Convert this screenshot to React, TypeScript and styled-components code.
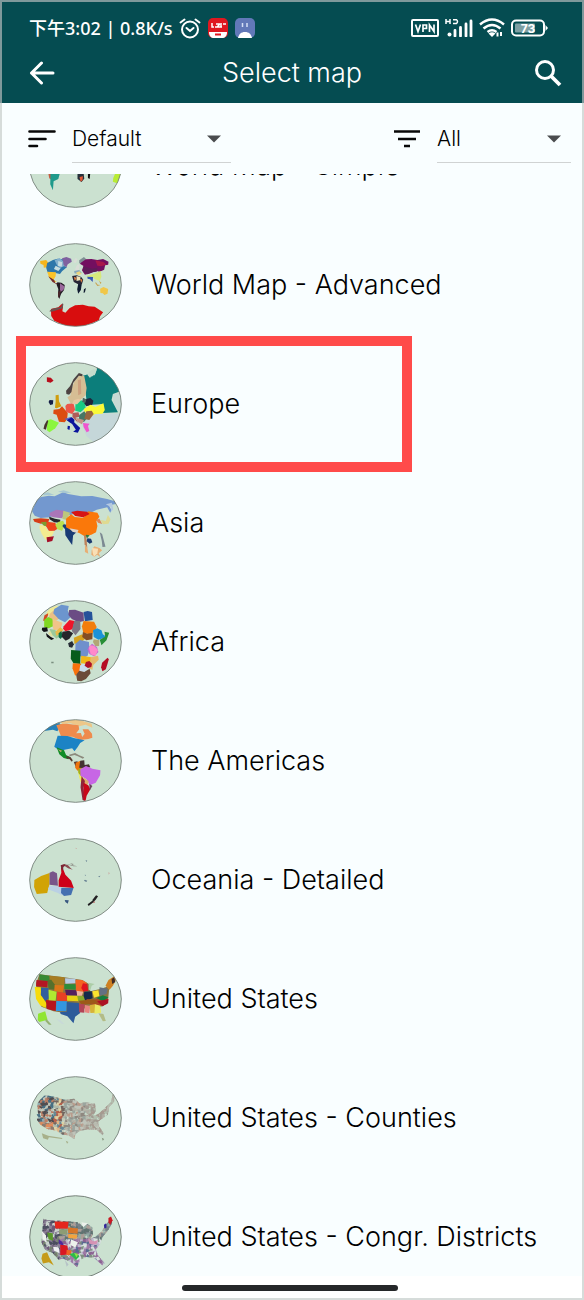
import React, { useId, useLayoutEffect, useRef } from 'react';
import styled, { createGlobalStyle } from 'styled-components';

const GlobalStyle = createGlobalStyle`
  *, *::before, *::after { box-sizing: border-box; }
  body {
    margin: 0;
    background: #fff;
    color: #000;
    font-family: Inter, "Noto Sans CJK SC", sans-serif;
  }
`;

const Screen = styled.div`
  display: flex;
  flex-direction: column;
  height: 100vh;
  background: #fff;
  box-shadow: inset 0 0 0 2px #d6dcda;
`;

const Header = styled.header`
  flex: none;
  background: #054c51;
  border: 2px solid #7f999b;
  border-bottom: 0;
  color: #fff;
`;

const StatusBar = styled.div`
  display: flex;
  align-items: center;
  justify-content: space-between;
  height: 42px;
  padding: 10px 34px 0 27px;
`;

const StatusGroup = styled.div<{ $gap: number }>`
  display: flex;
  align-items: center;
  gap: ${(p) => p.$gap}px;
`;

const Clock = styled.span`
  font: 500 18px/24px "Noto Sans", "Noto Sans CJK SC", sans-serif;
  white-space: pre;
`;

const TitleBar = styled.div`
  display: grid;
  grid-template-columns: 32px 1fr 32px;
  align-items: center;
  height: 59px;
  padding: 0 18px 2px 24px;
`;

const Title = styled.h1`
  margin: 0;
  padding-right: 6px;
  font-size: 27px;
  font-weight: 350;
  line-height: 32px;
  text-align: center;
`;

const IconButton = styled.button`
  display: flex;
  align-items: center;
  justify-content: center;
  width: 32px;
  height: 32px;
  padding: 0;
  border: 0;
  background: none;
  color: inherit;
`;

const Body = styled.main`
  display: flex;
  flex: 1;
  flex-direction: column;
  min-height: 0;
  margin: 0 2px;
  background: #f9feff;
`;

const FilterBar = styled.div`
  display: flex;
  flex: none;
  justify-content: space-between;
  height: 71px;
  padding: 12px 11px 11px 26px;
`;

const Filter = styled.label<{ $gap: number }>`
  display: flex;
  align-items: center;
  gap: ${(p) => p.$gap}px;
`;

const SelectWrap = styled.span<{ $width: number }>`
  display: grid;
  align-items: center;
  width: ${(p) => p.$width}px;
  height: 48px;
  border-bottom: 1px solid #d0d3d3;

  > * { grid-area: 1 / 1; }
  > svg { justify-self: end; margin-right: 10px; pointer-events: none; }
`;

const Select = styled.select`
  width: 100%;
  height: 47px;
  padding: 1px 0 0;
  border: 0;
  background: none;
  appearance: none;
  color: #000;
  font: 350 21px/28px Inter, sans-serif;
`;

const List = styled.ul`
  flex: 1;
  min-height: 0;
  margin: 0;
  padding: 0;
  list-style: none;
  overflow-y: auto;
  scrollbar-width: none;
`;

const Row = styled.li`
  position: relative;
  height: 119px;
`;

const RowLink = styled.a`
  display: flex;
  align-items: center;
  gap: 29px;
  height: 100%;
  padding: 0 12px 0 27px;
  color: #000;
  font-size: 27px;
  font-weight: 350;
  line-height: 32px;
  text-decoration: none;
  white-space: nowrap;
`;

const Highlight = styled.span`
  position: absolute;
  inset: -8px auto -9px 14px;
  width: 396px;
  border: 10px solid #ff4b4a;
  pointer-events: none;
`;

const Thumb = styled.svg`
  flex: none;
  width: 93px;
  height: 84px;
`;

const HomeArea = styled.footer`
  display: flex;
  flex: none;
  align-items: center;
  justify-content: center;
  height: 24px;
  margin: 0 2px;
  padding: 2px 4px 0 0;
  border-bottom: 2px solid #d6dcda;
  background: #fff;
`;

const HomeBar = styled.span`
  width: 216px;
  height: 6px;
  border-radius: 3px;
  background: #252729;
`;

/* ---------- icons ---------- */

const AlarmIcon = () => (
  <svg width="22" height="21" viewBox="0 0 22 21" fill="none" stroke="#fff" strokeWidth="2" strokeLinecap="round">
    <circle cx="11" cy="11.5" r="8" />
    <path d="M7.5 10l3.5 3 3.5-3M1.5 4.5l4-3M20.500 4.500l-4-3" />
  </svg>
);

const RedAppIcon = () => (
  <svg width="20" height="20" viewBox="0 0 20 20">
    <rect width="20" height="20" rx="5" fill="#df1820" />
    <path d="M1 14h18c0 4-2 6-5 6H6c-3 0-5-2-5-6z" fill="#fff" />
    <path d="M4 5v4h2M8 6h4M9 9l3-3M13 5v4M15 6h3M7 9h7" stroke="#fff" strokeWidth="1.500" fill="none" />
    <path d="M7 16.500h6" stroke="#df1820" strokeWidth="2" />
  </svg>
);

const BlueAppIcon = () => (
  <svg width="20" height="20" viewBox="0 0 20 20">
    <rect width="20" height="20" rx="5" fill="#6278b8" />
    <path d="M3 20c1-4 3-6 7-6s6 2 7 6z" fill="#fff" />
    <path d="M7.500 5v4M12 5v4" stroke="#d5def5" strokeWidth="1.500" />
  </svg>
);

const VpnIcon = () => (
  <svg width="28" height="18" viewBox="0 0 28 18" fill="none" stroke="#fff">
    <rect x="1" y="1" width="26" height="16" rx="1" strokeWidth="2" />
    <path d="M4.500 5.500l2.500 7 2.500-7M12 13V6h3.500v3.500H12M18.500 13V6l4.500 6.500V5.500" strokeWidth="1.700" />
  </svg>
);

const SignalIcon = () => (
  <svg width="28" height="18" viewBox="0 0 28 18" fill="none" stroke="#fff">
    <path d="M1 0v5M1 2.500h4M5 0v5M8 .8h3.500q2 1.700 0 3.700H8" strokeWidth="1.500" />
    <circle cx="4.500" cy="15.500" r="2" fill="#fff" stroke="none" />
    <path d="M10 17v-5.500M15.500 17V8.500M21 17V5M26 17V2" strokeWidth="2.800" strokeLinecap="round" />
  </svg>
);

const WifiIcon = () => (
  <svg width="26" height="20" viewBox="0 0 26 20" fill="none" stroke="#fff" strokeWidth="2.500">
    <path d="M1 6.500q12-10 24 0M4.500 10.500q8.500-7 17 0M8.500 14q4.500-3.500 9 0" />
    <path d="M9.500 15.500q3.500-2.500 7 0L13 19z" fill="#fff" stroke="none" />
    <path d="M18.500 14.500v4M22 14v4" strokeWidth="2" />
  </svg>
);

const BatteryIcon = () => (
  <svg width="37" height="18" viewBox="0 0 37 18">
    <rect x="1" y="1.500" width="32" height="15" rx="4" fill="none" stroke="#fff" strokeWidth="2" />
    <rect x="4" y="4.500" width="20" height="9" rx="1" fill="#7d9fa3" />
    <path d="M34.500 6l2.500 3-2.500 3z" fill="#fff" />
    <text x="17" y="13.500" textAnchor="middle" fontFamily="Inter, sans-serif" fontSize="12" fontWeight="700" fill="#fff">73</text>
  </svg>
);

const BackIcon = () => (
  <svg width="26" height="24" viewBox="0 0 26 24" fill="none" stroke="#fff" strokeWidth="3" strokeLinecap="round" strokeLinejoin="round">
    <path d="M24 12H2.500M12.500 2l-10 10 10 10" />
  </svg>
);

const SearchIcon = () => (
  <svg width="28" height="28" viewBox="0 0 28 28" fill="none" stroke="#fff" strokeWidth="3">
    <circle cx="11" cy="11" r="8.500" />
    <path d="M17 17l9 9" strokeWidth="3.800" />
  </svg>
);

const SortIcon = () => (
  <svg width="28" height="20" viewBox="0 0 28 20" stroke="#080808" strokeWidth="2.600" strokeLinecap="round">
    <path d="M1.500 2.500h25M1.500 10h16M1.500 17h7.500" />
  </svg>
);

const FilterIcon = () => (
  <svg width="28" height="20" viewBox="0 0 28 20" stroke="#080808" strokeWidth="2.600">
    <path d="M1 2.500h26M5 10h18M11 17h6" />
  </svg>
);

const Caret = () => (
  <svg width="14" height="8" viewBox="0 0 14 8">
    <path d="M0 .5h14l-7 7z" fill="#4a4c4e" />
  </svg>
);

/* ---------- map thumbnails ---------- */

type Patch = [fill: string, d: string];

interface MapArt {
  box: [number, number, number, number];
  patches: Patch[];
  mosaic?: { outline: string; area: [number, number, number, number]; size: number; colors: (t: number, u: number) => string[] };
  over?: Patch[];
}

/* Small repeatable number source for the fine county mosaics. */
const noise = (seed: number) => {
  let s = seed;
  return () => {
    s = (s * 16807) % 2147483647;
    return s / 2147483647;
  };
};

const mosaicPatches = ({ area, size, colors }: NonNullable<MapArt['mosaic']>): Patch[] => {
  const rnd = noise(71);
  const [x0, y0, w, h] = area;
  const out: Patch[] = [];
  for (let y = y0; y < y0 + h; y += size) {
    for (let x = x0; x < x0 + w; x += size) {
      const palette = colors((x - x0) / w, (y - y0) / h);
      const j = () => Math.round((rnd() - 0.5) * size * 0.9);
      const e = size + 2;
      out.push([
        palette[Math.floor(rnd() * palette.length)],
        `M${x + j()} ${y + j()}L${x + e + j()} ${y + j()}L${x + e + j()} ${y + e + j()}L${x + j()} ${y + e + j()}Z`,
      ]);
    }
  }
  return out;
};

const simple: MapArt = {
  box: [88, 39, 276, 252],
  patches: [
    ['#c65b40', 'M145 185h14l-3 22-8-5z'],
    ['#1f9a8b', 'M152 185h28l-5 19-14 7-2 27-8-18z'],
    ['#25303a', 'M232 185h18l2 18-8 10-12-9z'],
    ['#e35936', 'M238 198l10-2-1 12-6 4z'],
    ['#111', 'M263 185h7l-2 19-5-3z'],
    ['#b8ec35', 'M345 185h25l-15 34-18-7 1-11z'],
  ],
};

const advanced: MapArt = {
  box: [59, 37, 276, 252],
  patches: [
    ['#f6b51c', 'M92 91l18-3 6 8-3 14-10 1-1-8-9-4z'],
    ['#2d76aa', 'M113 97l17-9 14-4 17 2 2 20 9 3-15 13-6 8-10-2-27-3-4-14z'],
    ['#82afcd', 'M135 89l15-7 10 9 4 15-13 6-9-8z'],
    ['#c6dce0', 'M146 91l12 4-2 13-11-3zM138 105l15 8-7 8-13-6z'],
    ['#80619f', 'M157 83l13-4 14 5 2 9-12 8-4 9-8-6-2-13z'],
    ['#fac329', 'M113 123l26 2-1 12-6 10 9 7-8 1-14-14z'],
    ['#742c2e', 'M116 137l18 11 3 9 9 1-2 4-15-8z'],
    ['#221b24', 'M143 155l12 1 10 7-2 15-9 12-5 15-4-10 1-20-5-13z'],
    ['#9a679c', 'M151 158l13 9-2 10-11 8z'],
    ['#4a282b', 'M145 184l9-5-6 24-3-7z'],
    ['#d9ded7', 'M197 82l6 3-5 12-8-2zM202 102l8-1-3 18-8 5-3-9z'],
    ['#7f8f94', 'M208 89l14-10 7 7-13 13-8-1z'],
    ['#730f60', 'M216 94l12-8 16-1 18 3 17-3 16 8-1 9-9 2-3 13-13 6-12-3-13 7-19 5-9-13 5-13-11-7z'],
    ['#a8174a', 'M256 89l24 5 9 8-16 5-11-2z'],
    ['#5d1d58', 'M220 107l27 7 15-3-2 12-14 2-13 6-12-6z'],
    ['#89a9bb', 'M193 121l15-3 8 9-12 3-10-2z'],
    ['#ecd57b', 'M198 126l11-4 6 8-11 3z'],
    ['#252536', 'M187 136l14-2 13 5 6 8-4 14-6 9-5-9-13-7-3-10z'],
    ['#ece2bb', 'M200 136l12 3-2 10-10 2z'],
    ['#df8145', 'M192 138l9 4-6 8zM210 144l8 3-4 9z'],
    ['#111c31', 'M205 160l10 3-2 15-8 11-3-13zM222 176l6-4-3 13-4 2z'],
    ['#d6e87c', 'M229 136l23-7 20-8 2 17-5 13-14-5-9-8-10 3z'],
    ['#3657b5', 'M232 138l17 1-1 15-8-8-7-2z'],
    ['#f0c749', 'M270 174l10-5 14 6-2 14-9 4-5-5-7-1z'],
    ['#c8a24b', 'M257 154l6 8 9 1-10 3-6-8zM267 150l7 6-3 4z'],
    ['#d80d0e', 'M124 235l22-5 10-10 4 8-2 14 9 4 12-13 17-9 23-2 17 5 18 1 25 17-9 12-4 12-18 7-20 8-31 4-34-4-29-14-9-14z'],
    ['#6d514e', 'M119 242l9-8 26-5 4-11 3 2-2 13-32 10z'],
  ],
};

const europe: MapArt = {
  box: [59, 96, 276, 252],
  patches: [
    ['#c5d7d9', 'M205 258l30 6 23-16 74 3-15 41-28 29-36 17-24-20-9-26z'],
    ['#c7d9d4', 'M308 192l26-4v55l-23-7z'],
    ['#0c7e7b', 'M219 137l18-5 8 8 10-8 7-22 24 9 20 17 13 17 11 31-22 8-4 18 19 37-44 2-1-27-30 2-18-10-4-35-8-35z'],
    ['#c5dccc', 'M237 126l14-10 10 2-7 18-8-1-6 9-8-10z'],
    ['#d6be94', 'M184 181l9-25 17-22 13 4 7 36-3 22-17 15-12-1-3 10-13-1-9-17 9-6z'],
    ['#cda07f', 'M204 151l9-3 1 43-9 5z'],
    ['#4d4342', 'M169 182l12-14 10-20 16-19 11 4-1 6-10-2-17 22-5 27-7 8-8-2z'],
    ['#b80e1b', 'M112 142l12 1 8 9-9 6-11-3z'],
    ['#d09d0d', 'M138 196l9-2 1 20 7 15-14 6-5-2 2-18z'],
    ['#141e46', 'M120 210l11 1-1 12-8 2-5-9z'],
    ['#dc4c10', 'M132 239l17-2 8-8 17 20-2 19-7 9-17-2-7-21-10-3z'],
    ['#ec564a', 'M172 222l19-2 5 19-9 13-18-6-2-18z'],
    ['#19ca83', 'M197 220l15-10 14 6 1 17-15 14-16-5z'],
    ['#21243a', 'M229 207l12-3 9 8-3 12-18 5-6-9z'],
    ['#4c655e', 'M219 203l10 5-3 11-9-3z'],
    ['#fafa36', 'M222 237l20-13 14 7 24-11 4 20-7 11-22 1-9 6-6-13-16 2z'],
    ['#8bf63e', 'M113 271l11-3 24 10-11 17-17 12-8-6z'],
    ['#46352e', 'M105 284l8-14 3 4-7 25-7-3z'],
    ['#5967c9', 'M163 267l20-6 9 7-14 4z'],
    ['#0b159c', 'M171 271l15-9 8 7-1 8 18 17-7 14-14-3 8-6-11-17-8-5zM174 287l7 2-2 11-6-3z'],
    ['#af5b59', 'M188 249l18-2 3 13-12 3 8 16-17-18z'],
    ['#477765', 'M208 255l15-11 12 16-13 16-15-8z'],
    ['#98663f', 'M229 244l16-2 6 10-13 18-15-3z'],
    ['#c59485', 'M198 263l24 7-6 13-12-7z'],
    ['#ef55ce', 'M219 279l20 2-5 7 4 15-8 4-9-16z'],
    ['#e7c6a1', 'M192 211l13-5 9 4-12 13-15-1z'],
  ],
};

const asia: MapArt = {
  box: [59, 33, 276, 252],
  patches: [
    ['#7398cf', 'M81 91l14-10 23-4 17 2 25-12 15 5 39 7 33-1 44 9 23 7 3 8-21 4 8 15-4 7-9-16-31 7-18 9-34-3-25 10-35-7-27 14-27 2-18-7-8-13z'],
    ['#a8c8d2', 'M99 72l16-5 19 8-31 1zM145 65l17-4 23 7-20 1z'],
    ['#aa76b8', 'M121 128l19-9 24 3 7 10-15 13-26-3-11-6z'],
    ['#bdc77d', 'M161 122l20 6-10 22-13-3z'],
    ['#25262b', 'M119 140l17 6 16 3-1 9-17-1-14-9z'],
    ['#d63e18', 'M71 147l23-2 25 2-3 11-22 3-19-6z'],
    ['#7e9a30', 'M94 157l15-2 13 12-18 2z'],
    ['#ee451b', 'M112 155l24 3 12 15-13 9-17 1-8-14z'],
    ['#f4eb90', 'M91 165l16 3 8 14 19 2-8 16-18 10-11-18-7-17z'],
    ['#a70e27', 'M111 202l22-3-5 14-15 4z'],
    ['#b9e051', 'M147 155l13-3 6 12-9 18-14-4-6-14z'],
    ['#193b75', 'M162 163l13 2 16 15 17-1-18 17-3 29-10-14-10-15-1-18-8-10z'],
    ['#fa780a', 'M169 146l15-13 11 8 24 2 15-12-1-7 29 4 6 12-9 14 3 14-4 19-14 7-20 5-16-10-25-9-14-8z'],
    ['#d61414', 'M184 126l18-4 29 3 8 7-19 10-24-4-6-6z'],
    ['#ddd3ca', 'M179 175l27 5-4 9-14-4z'],
    ['#2e7a41', 'M228 194l11 2-7 8-6-4z'],
    ['#bd8159', 'M222 194l7 4 3 36-8-11z'],
    ['#1e3c6f', 'M232 205l11 1 4 11-8 4-9-7z'],
    ['#e8ae73', 'M225 224l7 9 3 18-10-5zM245 240l8-11 15 5 8 7-10 9 5 11-10-7-8 6-9-6z'],
    ['#f9dfb5', 'M246 234l18 2-2 14-10 10-4-11z'],
    ['#7c8992', 'M269 187l7 5 10 38-9 1-2-18z'],
    ['#dfda91', 'M272 150l15 3 6-18 8 13-6 13-17 2z'],
    ['#df8554', 'M258 149l10-3 8 16-12-4z'],
    ['#b5c9e2', 'M287 103l18-5 4 20-7 8 1-14z'],
  ],
};

const africa: MapArt = {
  box: [59, 391, 276, 252],
  patches: [
    ['#f0e995', 'M110 430l12-14 20-8 5 6-10 7-10 11-10 7z'],
    ['#d44c22', 'M101 453l4-16 11-6-1 7-8 16z'],
    ['#eabf85', 'M121 432l13-12 10-1 4 28-9 6-22-7z'],
    ['#6c95ce', 'M134 418l21-13 22 4-3 14 9 19-17 16-19-10-16-17z'],
    ['#80d721', 'M104 450l12-8 13 6 5 20-17 8-13-3z'],
    ['#f1c489', 'M129 448l7 3 22 8-5 20-21 3-3-15z'],
    ['#131317', 'M98 474l15-1 2 12-12 2-6-6zM109 490l15 12 10 5-9 4-13-10z'],
    ['#dfe0a0', 'M115 491l12-11 9 14-10 8z'],
    ['#9bc99b', 'M119 477l18 4 12 19-8 7-12-10z'],
    ['#6b4c84', 'M178 421l18-1 25 9 1 25-16 4-20-10-10-12z'],
    ['#26529a', 'M221 427l12-3 13 3 2 24-23 4z'],
    ['#ef1529', 'M162 470l17-19 16 3-7 25-21 6-7-8z'],
    ['#e9bb4a', 'M137 486l15-13 9 7-11 14-10 4z'],
    ['#0b6d45', 'M147 491l8-7 4 16-6 8-6-5z'],
    ['#26272c', 'M158 486l20-3 12 8-11 16-11 6-12-12z'],
    ['#7b7783', 'M193 454l18-1 1 25-15 19-11-13z'],
    ['#f27d0c', 'M221 454l31 2 8 16-7 15-15 7-18-5-4-19z'],
    ['#d5a31f', 'M192 504l25-10 8 14-10 9-21 6z'],
    ['#824e24', 'M219 487l13 5 16-3-1 20-18 3-12-10z'],
    ['#1a92d8', 'M249 482l12-6 13 6 4 12 12 8-25 8-14-8z'],
    ['#288e37', 'M283 486l14 3-8 23-15 15-5-17 16-9z'],
    ['#b1a675', 'M251 509l17 3-1 17-11 1-7-13z'],
    ['#6f90cc', 'M197 522l13-11 27 6 1 24-5 17-13 7-15-9-9-4z'],
    ['#262c35', 'M175 521l12-7 5 10-5 10-9-2z'],
    ['#c06ad0', 'M236 532l10-10 15 11 4 14-12 13-15-7-5-14z'],
    ['#ff89cb', 'M240 527l12 1 12 13-8 18-14-5-5-19z'],
    ['#075c1c', 'M184 541l28 2-1 40-20-2-8-14z'],
    ['#f1b718', 'M214 558l30 5 10 14-12 7-29-3z'],
    ['#e7ba6c', 'M242 563l22-5 2 12-16 16-3 14-9-3z'],
    ['#f8710b', 'M189 581l25 1-3 24-15 12-8-22z'],
    ['#cadcec', 'M211 587l11-5 12 15-11 10-15-2z'],
    ['#ae1028', 'M228 577l10-3 8 8-2 10-10 3-10-7z'],
    ['#6b4b3a', 'M208 603l15 4 16-10 3 14-14 17-14 7-12-2-3-18z'],
    ['#b50b22', 'M276 579l16-15 4 5-9 30-10 6-4-12z'],
    ['#7a8e7f', 'M125 576h7v5h-7z'],
  ],
};

const americas: MapArt = {
  box: [59, 28, 276, 252],
  patches: [
    ['#2782b9', 'M108 59l23-15 18-4 6 7-12 18-13-5-26 4z'],
    ['#edc789', 'M150 35l31-6 30 3 34 10 2 12-20-9-19 5-25-9-25 2z'],
    ['#ee8b4d', 'M140 47l14-4 17-1 35 5 2 12-9 12 14-1 4 12 7-10-6-13 17 0 11 13 1 12-12 4-23 3-24-10-34-1-5-13z'],
    ['#1c83c5', 'M144 78l29 1 22 7 29 6-13 8-8 13-9 12-7-9-23 4-8 8-22-17z'],
    ['#118d26', 'M141 113l22 9 6 14 10 5-3 8-14-4-13-11z'],
    ['#c1a370', 'M145 119l12 4-4 5z'],
    ['#573c32', 'M170 139l12 3 7 10-3 4-7-8-10-3zM192 157l10-2 6 6-9 14z'],
    ['#8c8a7d', 'M178 135l18-5 12 7 15 6-4 4-15-7-10-4-14 4z'],
    ['#ed750d', 'M198 159l12-5 11 5-5 20-13 4-7-9z'],
    ['#433132', 'M211 153l12-1 1 14 13-2 4 9-14 3-19-2z'],
    ['#a4b01a', 'M205 178l13-4 7 14-12 11-8-9z'],
    ['#edec57', 'M204 186l6 12 9 3 7 24-14-7z'],
    ['#c766e5', 'M211 179l17-10 19 8 24 5-1 15-13 22-17 8-11-19-17-10z'],
    ['#dcae6a', 'M222 204l14 11-2 9-15 4z'],
    ['#8f2539', 'M215 199l10 15-4 21 4 39-7-3-6-38z'],
    ['#c70718', 'M221 219l14 8 6 12-11 19-3 15-6-3z'],
    ['#68405b', 'M238 222l9 7-8 14z'],
  ],
};

const oceania: MapArt = {
  box: [59, 385, 276, 252],
  patches: [
    ['#d1a306', 'M75 511l20-12 25-9v33l-7 27-31 3-8-21z'],
    ['#78558a', 'M120 489l10-4 12 6 3 37-25-3z'],
    ['#bad0e4', 'M120 528l35 2 3 28-13-8-30-11z'],
    ['#cd0018', 'M147 512l8-23-1-13 4-3 9 22 17 18 8 22-45-4z'],
    ['#4470b0', 'M155 534l36 1-7 21-21 3-9-9z'],
    ['#385780', 'M165 571l12 1-3 10-7-5z'],
    ['#7d2534', 'M153 467l11-4 5 4-8 5-1 11-5-4z'],
    ['#8c4a50', 'M165 464l10 3 8 9 6 4-14-4-9-6z'],
    ['#8a8a83', 'M165 462l16 3 22 5-12 0zM181 461l11 2-4 3z'],
    ['#222022', 'M233 584l16-12 2 5-15 12zM247 571l11-14 6 3-7 10-7 7z'],
    ['#b83130', 'M249 578l5-3-1 5z'],
    ['#678093', 'M225 510l7 3-3 4-7-4zM227 451l5 2-3 4zM264 500l7-2-3 5zM225 494l3 5-3-1z'],
    ['#c98985', 'M198 414l3 2-3 2zM295 488l3 2-2 5z'],
  ],
};

const unitedStates: MapArt = {
  box: [59, 22, 276, 252],
  patches: [
    ['#8a7440', 'M90 74l74 9 53 8 20 12 4 22 26-6 24-8 6 6-3 30-14 22-16 4-50 4-20 6-22 8-40-6-36-14-14-30-2-40z'],
    ['#388a33', 'M90 74l32 5-4 18-28-5z'],
    ['#b41622', 'M81 91l34 3-2 19-33-3z'],
    ['#f6db0b', 'M76 112l18 1 1 23 17 27-4 12-16-8-12-19z'],
    ['#a77c22', 'M119 78l45 5-1 23-27-1-14-10z'],
    ['#56702c', 'M114 91l11-1 12 17-2 13-18-3z'],
    ['#315e9d', 'M95 114l22 1 1 31-10 8-14-18z'],
    ['#dc7618', 'M135 106l28 1-3 22-26-5z'],
    ['#b0eb31', 'M117 120l24 6-3 27-20 1z'],
    ['#e94124', 'M142 127l31 3-1 24-30-1z'],
    ['#b7cce4', 'M166 86l31 1v14l-30 1z'],
    ['#2d8c38', 'M164 103l34 1-1 16-33-2z'],
    ['#54205d', 'M166 120l34 2 3 15-34-1z'],
    ['#f36322', 'M197 90l20 1 14 9-12 14 1 13-21-3z'],
    ['#efb49f', 'M200 123l20 3-4 12-14 1z'],
    ['#df1420', 'M219 101l13 2 3 20-14 3-7-11z'],
    ['#accda7', 'M236 99l18 4-9 5-4 14-5-2z'],
    ['#e7d113', 'M172 138l32 1 3 16-35-2z'],
    ['#88aa2c', 'M202 138l19 1 6 18-22-3z'],
    ['#14294a', 'M223 126l22-1 3 21-22 7-5-14z'],
    ['#fbe32e', 'M247 125l18-3 3 17-16 5z'],
    ['#637082', 'M268 113l24 4-3 16-20 5z'],
    ['#ae4b23', 'M229 148l23 3 26-10 16 7-4 15-23 6-30-6z'],
    ['#147d3d', 'M259 145l19-8 17 6-16 12z'],
    ['#9c5a19', 'M207 153l45-4 13 11-50 5z'],
    ['#b6141d', 'M109 151l31 3-2 30-26-6z'],
    ['#3396e1', 'M140 154l32 1-2 30-31-1z'],
    ['#2d5b9a', 'M171 157l36 3 4 30-15 11-5 20-18-21-20-7-2-6 20-1z'],
    ['#b34457', 'M207 162l17 2-1 25-15-1z'],
    ['#e88580', 'M225 166l16 3-3 22-14-3z'],
    ['#ac1223', 'M261 155l34-7-1 13-17 9z'],
    ['#d7b338', 'M239 167l17-4 4 26-19 1z'],
    ['#eaea62', 'M255 164l16 4 2 21-20 3z'],
    ['#b3bc87', 'M265 191l15 2 7 21-9 1z'],
    ['#ce8021', 'M286 108l9-17 18-12 4 12-9 17-10 12z'],
    ['#3f2b26', 'M304 88l8-5 3 14-9 6z'],
    ['#90e532', 'M86 192l21-7 7 25-24 7-5-5z'],
    ['#94af71', 'M111 208l15 17-8 0-11-12z'],
    ['#c8d9d8', 'M139 207l12 4 13 12-8-1z'],
  ],
};

const counties: MapArt = {
  box: [59, 379, 276, 252],
  patches: [
    ['#a7b08a', 'M97 551l19 7 42 7-1 3-39-5-3 7-14-4zM168 573l8 4-4 5z'],
    ['#86957e', 'M275 564l7 4-4 5z'],
  ],
  mosaic: {
    outline:
      'M105 436l30 5 31 9 27-3 16 14 22-3 24 4 2 22-8 16 17-8 21-20 15-14 6-25 5-2-1 25-15 16-4 23-19 13-10 8 3 13 13 22-2 6-18-16-26-2-26 6-11 8-4 16-17-12-18-2-18-12-26-5-21-13-10-13-3-26 5-27z',
    area: [84, 428, 228, 146],
    size: 8,
    colors: (t, u) => {
      if (t < 0.18) return u < 0.6 ? ['#476f83', '#8fa9ac', '#514d50', '#c0c4b8', '#b97e65'] : ['#e28b5b', '#b98f7c', '#8a7c70'];
      if (t < 0.34) return ['#c5ccba', '#ded3a6', '#b5614c', '#678894', '#dfb487', '#73665f', '#aeb9ac'];
      if (t < 0.6) return ['#9ba59e', '#b5b3a7', '#8f8880', '#bfc4ba', '#b99b8b'];
      return ['#b0ada3', '#a19c93', '#b9bbb0', '#a7998f', '#b1bdad'];
    },
  },
};

const districts: MapArt = {
  box: [80, 48, 247, 226],
  patches: [
    ['#c59b18', 'M116 206l12-4 6 14 12 22-13-9-16 3-4-13z'],
    ['#b6c2c7', 'M175 222l10 13-5 6zM274 220l8 12-4 3z'],
  ],
  mosaic: {
    outline:
      'M118 112l13 4 30 1 51 4 10 12 13-7 13 9 2 18-6 12 13-5 17-15 9-15 15-19 3 13-12 20-14 18-6 17-11 14 4 16 16 20-3 9-23-22-20-1-16 7-8 20-16-14-22-9-11 3-16-18-20-9-10-20 2-27z',
    area: [106, 104, 200, 136],
    size: 7,
    colors: (t, u) => {
      if (t < 0.25) return ['#6c5a77', '#76846f', '#4b4d60', '#8b8197', '#c9d1cd'];
      if (u < 0.45) return ['#91aaa3', '#607371', '#ac9e97', '#768188'];
      return ['#8b6191', '#bfb8cf', '#9d7aa6', '#596a91', '#d6e0dd', '#7f9180'];
    },
  },
  over: [
    ['#e4271d', 'M148 119l37 1-2 19-33-1z'],
    ['#d77528', 'M183 135l27 3-1 14-25-2z'],
    ['#f2a33f', 'M184 153l25 2-3 11-22-2z'],
    ['#8d9c74', 'M160 140l22 1-1 14-21-2z'],
    ['#5a972c', 'M128 149l15 2 1 20-12-4z'],
    ['#edf2ec', 'M114 145l11 11 1 19-9-8zM219 121l17 3-12 11zM192 168l18 7-7 14-14-7z'],
    ['#4f279d', 'M158 167l10 7 7 14-15-8z'],
    ['#d81923', 'M163 182l19 2 3 24-22 2z'],
    ['#ef6426', 'M180 195l13 2-1 14-13-2z'],
    ['#eef0f3', 'M144 187l15 2 2 16-15-8z'],
    ['#2dbb49', 'M187 207l16-4 11 10-9 9z'],
    ['#96dd4b', 'M200 204l11 3-5 9z'],
    ['#d692b4', 'M237 165l15 8 12-4-5 12-19-2z'],
    ['#cb1822', 'M291 110l7-4 4 10-6 13-5-8z'],
    ['#33279b', 'M279 128l6-4 1 12-6 2z'],
  ],
};

const MapThumb = ({ art }: { art: MapArt }) => {
  const id = useId();
  const [x, y, w, h] = art.box;
  const cx = x + w / 2;
  const cy = y + h / 2;
  const draw = (list: Patch[]) => list.map(([fill, d], i) => <path key={i} fill={fill} d={d} />);
  return (
    <Thumb viewBox={`${x} ${y} ${w} ${h}`} preserveAspectRatio="none" aria-hidden="true">
      <defs>
        <clipPath id={`${id}globe`}>
          <ellipse cx={cx} cy={cy} rx={w / 2 - 2} ry={h / 2 - 2} />
        </clipPath>
        {art.mosaic && (
          <clipPath id={`${id}land`}>
            <path d={art.mosaic.outline} />
          </clipPath>
        )}
      </defs>
      <ellipse cx={cx} cy={cy} rx={w / 2 - 2} ry={h / 2 - 2} fill="#cbe1d0" />
      <g clipPath={`url(#${id}globe)`}>
        {draw(art.patches)}
        {art.mosaic && <g clipPath={`url(#${id}land)`}>{draw(mosaicPatches(art.mosaic))}</g>}
        {art.over && draw(art.over)}
      </g>
      <ellipse cx={cx} cy={cy} rx={w / 2 - 2} ry={h / 2 - 2} fill="none" stroke="#6f7a73" strokeWidth="2.500" />
    </Thumb>
  );
};

/* ---------- page ---------- */

const maps: { name: string; art: MapArt; highlighted?: boolean }[] = [
  { name: 'World Map - Simple', art: simple },
  { name: 'World Map - Advanced', art: advanced },
  { name: 'Europe', art: europe, highlighted: true },
  { name: 'Asia', art: asia },
  { name: 'Africa', art: africa },
  { name: 'The Americas', art: americas },
  { name: 'Oceania - Detailed', art: oceania },
  { name: 'United States', art: unitedStates },
  { name: 'United States - Counties', art: counties },
  { name: 'United States - Congr. Districts', art: districts },
];

const INITIAL_SCROLL = 68;

export default function App() {
  const listRef = useRef<HTMLUListElement>(null);

  useLayoutEffect(() => {
    if (listRef.current) listRef.current.scrollTop = INITIAL_SCROLL;
  }, []);

  return (
    <>
      <GlobalStyle />
      <Screen>
        <Header>
          <StatusBar>
            <StatusGroup $gap={7}>
              <StatusGroup $gap={6}>
                <Clock>下午3:02 | 0.8K/s</Clock>
                <AlarmIcon />
              </StatusGroup>
              <RedAppIcon />
              <BlueAppIcon />
            </StatusGroup>
            <StatusGroup $gap={6}>
              <VpnIcon />
              <SignalIcon />
              <WifiIcon />
              <BatteryIcon />
            </StatusGroup>
          </StatusBar>
          <TitleBar>
            <IconButton type="button" aria-label="Back">
              <BackIcon />
            </IconButton>
            <Title>Select map</Title>
            <IconButton type="button" aria-label="Search">
              <SearchIcon />
            </IconButton>
          </TitleBar>
        </Header>
        <Body>
          <FilterBar>
            <Filter $gap={16}>
              <SortIcon />
              <SelectWrap $width={159}>
                <Select aria-label="Sort order" defaultValue="Default">
                  <option>Default</option>
                </Select>
                <Caret />
              </SelectWrap>
            </Filter>
            <Filter $gap={16}>
              <FilterIcon />
              <SelectWrap $width={134}>
                <Select aria-label="Filter" defaultValue="All">
                  <option>All</option>
                </Select>
                <Caret />
              </SelectWrap>
            </Filter>
          </FilterBar>
          <List ref={listRef}>
            {maps.map(({ name, art, highlighted }) => (
              <Row key={name}>
                <RowLink href="#">
                  <MapThumb art={art} />
                  {name}
                </RowLink>
                {highlighted && <Highlight />}
              </Row>
            ))}
          </List>
        </Body>
        <HomeArea>
          <HomeBar />
        </HomeArea>
      </Screen>
    </>
  );
}
